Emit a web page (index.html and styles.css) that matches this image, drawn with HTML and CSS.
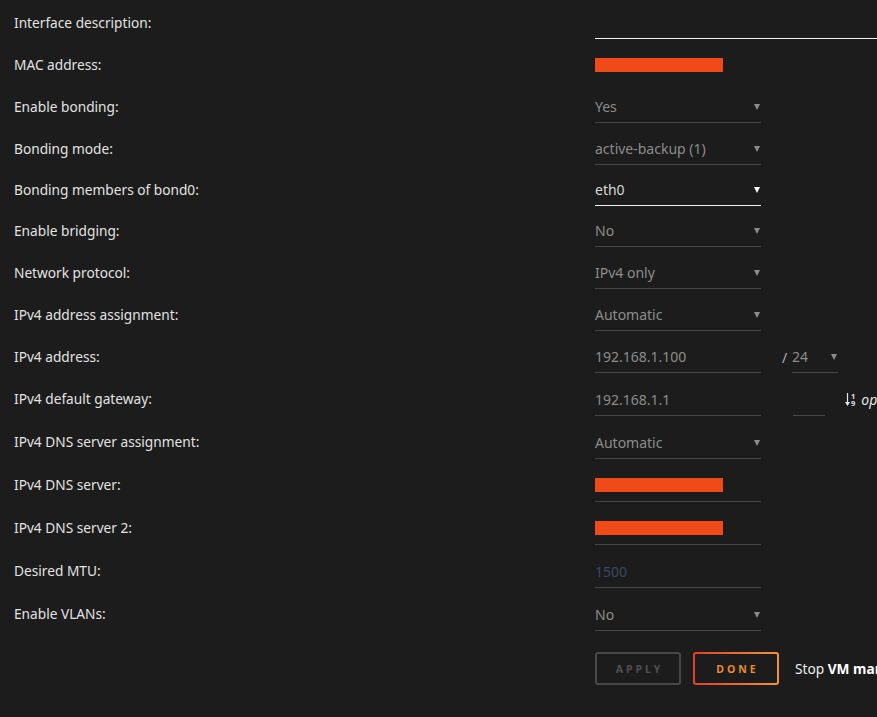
FILE: index.html
```html
<!DOCTYPE html>
<html lang="en">
<head>
    <meta charset="UTF-8">
    <meta name="viewport" content="width=device-width, initial-scale=1.0">
    <title>Interface settings</title>
    <link rel="stylesheet" href="styles.css">
</head>
<body>

<div class="form">
    <div class="row">
        <div class="label">Interface description:</div>
        <div class="field wide active"></div>
    </div>
    <div class="row">
        <div class="label">MAC address:</div>
        <div class="field plain"><span class="redact"></span></div>
    </div>
    <div class="row">
        <div class="label">Enable bonding:</div>
        <div class="field select"><span>Yes</span><i class="caret"></i></div>
    </div>
    <div class="row">
        <div class="label">Bonding mode:</div>
        <div class="field select"><span>active-backup (1)</span><i class="caret"></i></div>
    </div>
    <div class="row short">
        <div class="label">Bonding members of bond0:</div>
        <div class="field select active"><span>eth0</span><i class="caret"></i></div>
    </div>
    <div class="row">
        <div class="label">Enable bridging:</div>
        <div class="field select"><span>No</span><i class="caret"></i></div>
    </div>
    <div class="row">
        <div class="label">Network protocol:</div>
        <div class="field select"><span>IPv4 only</span><i class="caret"></i></div>
    </div>
    <div class="row">
        <div class="label">IPv4 address assignment:</div>
        <div class="field select"><span>Automatic</span><i class="caret"></i></div>
    </div>
    <div class="row">
        <div class="label">IPv4 address:</div>
        <div class="field"><span>192.168.1.100</span></div>
        <span class="slash">/</span>
        <div class="field select prefix"><span>24</span><i class="caret"></i></div>
    </div>
    <div class="row tall">
        <div class="label">IPv4 default gateway:</div>
        <div class="field"><span>192.168.1.1</span></div>
        <div class="field metric"></div>
        <span class="sort">
            <svg width="5" height="13" viewBox="0 0 5 13"><path d="M2.5 0 V11.5" stroke="#e6e6e6" stroke-width="1.2"/><path d="M0 9 L2.5 13 L5 9 Z" fill="#e6e6e6"/></svg>
            <span class="frac"><span>1</span><span>9</span></span>
        </span>
        <span class="opt">optional</span>
    </div>
    <div class="row tall">
        <div class="label">IPv4 DNS server assignment:</div>
        <div class="field select"><span>Automatic</span><i class="caret"></i></div>
    </div>
    <div class="row tall">
        <div class="label">IPv4 DNS server:</div>
        <div class="field"><span class="redact"></span></div>
    </div>
    <div class="row tall">
        <div class="label">IPv4 DNS server 2:</div>
        <div class="field"><span class="redact"></span></div>
    </div>
    <div class="row tall">
        <div class="label">Desired MTU:</div>
        <div class="field"><span class="placeholder">1500</span></div>
    </div>
    <div class="row tall">
        <div class="label">Enable VLANs:</div>
        <div class="field select"><span>No</span><i class="caret"></i></div>
    </div>

    <div class="actions">
        <button class="btn apply">APPLY</button>
        <button class="btn done">DONE</button>
        <span class="note">Stop <b>VM management</b></span>
    </div>
</div>

</body>
</html>
```

FILE: styles.css
```css
body {
    margin: 0;
    background-color: #1c1c1c;
    font-family: "Noto Sans", Arial, sans-serif;
    overflow: hidden;
}
.form {
    padding-top: 1px;
    width: 1100px;
}
.row {
    display: flex;
    align-items: center;
    height: 42px;
}
.row.short {
    height: 40px;
}
.row.tall {
    height: 43px;
}
.label {
    width: 595px;
    padding-left: 14px;
    box-sizing: border-box;
    font-size: 13.7px;
    color: #e2e2e2;
}
.field {
    position: relative;
    display: flex;
    align-items: center;
    width: 166px;
    height: 34px;
    padding-top: 2px;
    box-sizing: border-box;
    border-bottom: 1px solid #464646;
    font-size: 14px;
    color: #8c8c8c;
}
.field.plain {
    border-bottom: none;
}
.field.wide {
    width: 400px;
}
.field.active {
    border-bottom-color: #f2f2f2;
    color: #d8d8d8;
}
.caret {
    position: absolute;
    right: 1px;
    top: 15px;
    width: 0;
    height: 0;
    border-left: 3px solid transparent;
    border-right: 3px solid transparent;
    border-top: 6px solid #8c8c8c;
}
.field.active .caret {
    border-top-color: #ffffff;
}
.redact {
    display: block;
    width: 128px;
    height: 14px;
    background-color: #f04a19;
}
.placeholder {
    color: #3c4665;
}
.slash {
    margin-left: 21px;
    width: 10px;
    padding-top: 2px;
    font-size: 14px;
    color: #b0b0b0;
}
.field.prefix {
    width: 46px;
}
.field.metric {
    margin-left: 32px;
    width: 32px;
}
.sort {
    margin-left: 20px;
    padding-top: 2px;
    display: flex;
    align-items: center;
    gap: 1px;
}
.frac {
    display: flex;
    flex-direction: column;
    font-size: 7.5px;
    line-height: 7px;
    font-weight: bold;
    color: #e6e6e6;
}
.opt {
    margin-left: 6px;
    padding-top: 2px;
    font-size: 14px;
    font-style: italic;
    color: #e6e6e6;
}
.actions {
    display: flex;
    align-items: center;
    margin-top: 17px;
    padding-left: 595px;
}
.btn {
    width: 86px;
    height: 33px;
    border-radius: 3px;
    background-color: transparent;
    font-family: "Noto Sans", Arial, sans-serif;
    font-size: 10.5px;
    font-weight: bold;
    letter-spacing: 3px;
    padding: 0 0 0 3px;
    cursor: pointer;
}
.btn.apply {
    border: 2px solid #484848;
    color: #505050;
}
.btn.done {
    margin-left: 12px;
    border: 2px solid transparent;
    background: linear-gradient(#1c1c1c, #1c1c1c) padding-box,
                linear-gradient(to right, #e2402a, #f39335) border-box;
    color: #ec8a2e;
}
.note {
    margin-left: 16px;
    font-size: 13.7px;
    color: #eeeeee;
}
.note b {
    font-weight: bold;
    color: #ffffff;
}
```
